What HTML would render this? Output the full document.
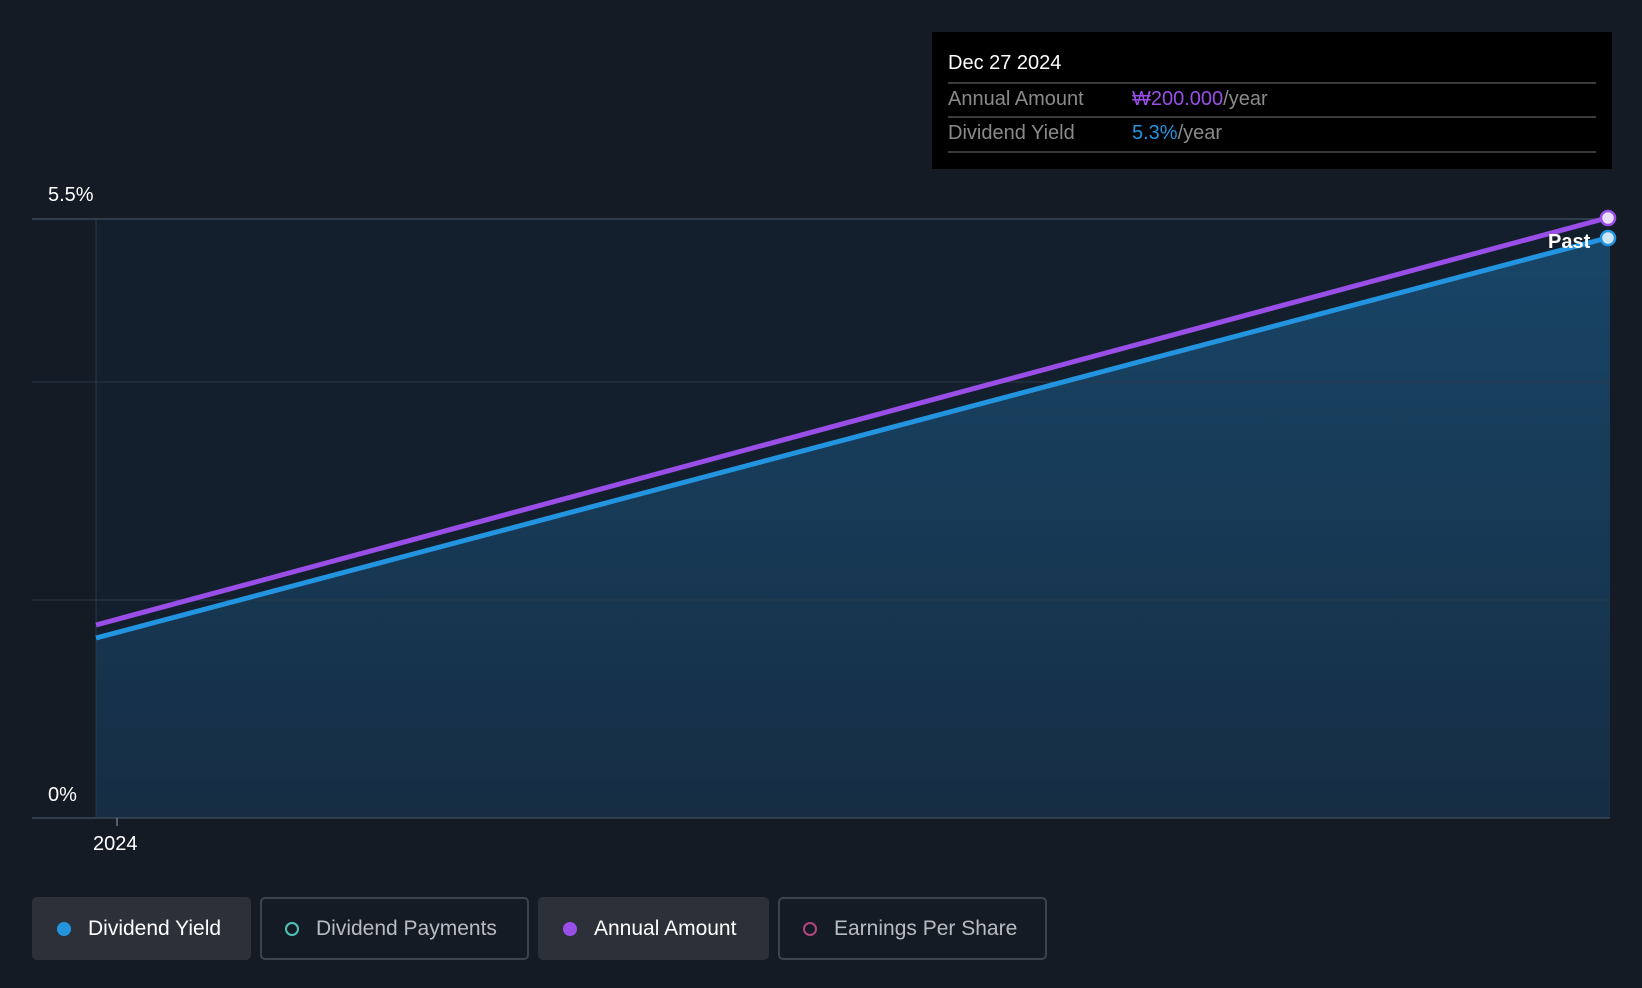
<!DOCTYPE html>
<html><head><meta charset="utf-8"><style>
body{margin:0;width:1642px;height:988px;background:#151b24;font-family:"Liberation Sans",sans-serif;overflow:hidden;position:relative}
.t{position:absolute;color:#fff}
.tip{position:absolute;left:932px;top:32px;width:680px;height:137px;background:#000}
.tip .r{position:absolute;left:16px;right:16px;font-size:20px;color:#8a8a8a}
.hr{position:absolute;left:16px;right:16px;height:2px;background:#3a3a3a}
.btn{position:absolute;top:897px;height:63px;border-radius:5px;box-sizing:border-box;font-size:21px;display:flex;align-items:center}
.dot{width:14px;height:14px;border-radius:50%;box-sizing:border-box;margin:0 17px 0 25px}
</style></head><body>
<svg width="1642" height="988" style="position:absolute;left:0;top:0">
<defs><linearGradient id="g" x1="0" y1="0" x2="0" y2="1"><stop offset="0" stop-color="#184567"/><stop offset="1" stop-color="#162d43"/></linearGradient></defs>
<rect x="96" y="219" width="1514" height="599" fill="#131f2c"/>
<polygon points="96,638 1607,238 1610,238 1610,818 96,818" fill="url(#g)"/>
<line x1="32" y1="219" x2="1610" y2="219" stroke="#3a4856" stroke-width="1.5"/>
<line x1="32" y1="382" x2="1610" y2="382" stroke="#2a3a4a" stroke-width="1"/>
<line x1="32" y1="600" x2="1610" y2="600" stroke="#2a3a4a" stroke-width="1"/>
<line x1="32" y1="818" x2="1610" y2="818" stroke="#3a4856" stroke-width="1.5"/>
<line x1="96" y1="219" x2="96" y2="818" stroke="#2a3a4a" stroke-width="1"/>
<line x1="117" y1="818" x2="117" y2="826" stroke="#6a7684" stroke-width="1.5"/>
<line x1="96" y1="638" x2="1607" y2="238" stroke="#2394e0" stroke-width="5"/>
<line x1="96" y1="625" x2="1607" y2="218" stroke="#9a4ee8" stroke-width="5"/>
<circle cx="1608" cy="238" r="7" fill="#cfe6f7" stroke="#2394e0" stroke-width="2.5"/>
<circle cx="1608" cy="218" r="7" fill="#eadcfb" stroke="#9a4ee8" stroke-width="2.5"/>
</svg>
<div class="t" style="left:48px;top:184px;font-size:20px">5.5%</div>
<div class="t" style="left:48px;top:784px;font-size:20px">0%</div>
<div class="t" style="left:93px;top:833px;font-size:20px">2024</div>
<div class="t" style="left:1548px;top:231px;font-size:20px;font-weight:bold">Past</div>
<div class="tip">
<div class="r" style="top:20px;color:#fff">Dec 27 2024</div>
<div class="hr" style="top:50px"></div>
<div class="r" style="top:56px">Annual Amount<span style="position:absolute;left:184px"><span style="color:#9a4ee8">₩200.000</span>/year</span></div>
<div class="hr" style="top:84px"></div>
<div class="r" style="top:90px">Dividend Yield<span style="position:absolute;left:184px"><span style="color:#2394e0">5.3%</span>/year</span></div>
<div class="hr" style="top:119px"></div>
</div>
<div class="btn" style="left:32px;width:219px;background:#2c3039;color:#fff"><span class="dot" style="background:#2394e0"></span>Dividend Yield</div>
<div class="btn" style="left:260px;width:269px;border:2px solid #3e434c;color:#b8bcc2"><span class="dot" style="border:2px solid #4fc3b8;margin-left:23px"></span>Dividend Payments</div>
<div class="btn" style="left:538px;width:231px;background:#2c3039;color:#fff"><span class="dot" style="background:#9a4ee8"></span>Annual Amount</div>
<div class="btn" style="left:778px;width:269px;border:2px solid #3e434c;color:#b8bcc2"><span class="dot" style="border:2px solid #b0467a;margin-left:23px"></span>Earnings Per Share</div>
</body></html>
